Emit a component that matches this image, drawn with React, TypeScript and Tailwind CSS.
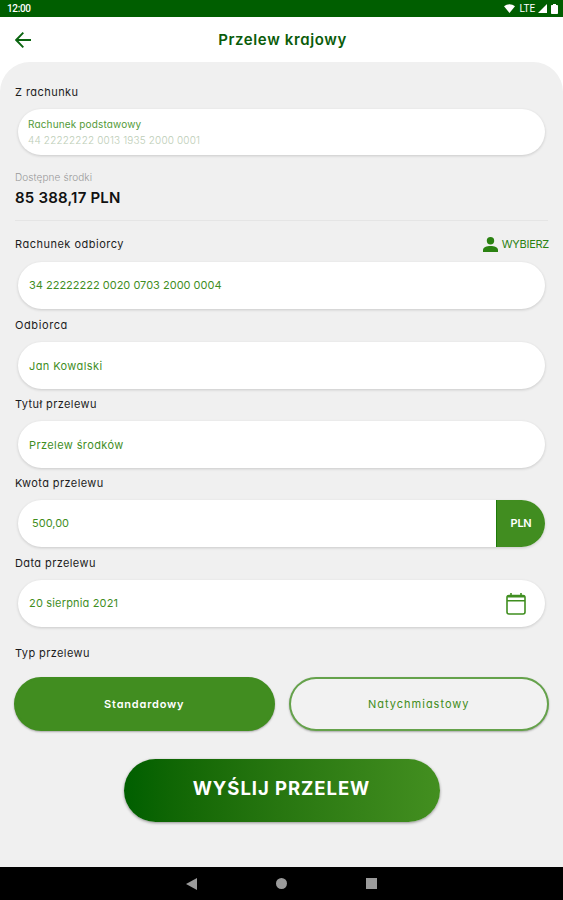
import React, { useState } from 'react';
import clsx from 'clsx';

type FieldProps = {
  label: string;
  labelClass?: string;
  className?: string;
  children: React.ReactNode;
};

const Field = ({ label, labelClass, className, children }: FieldProps) => (
  <div className={className}>
    <div className={clsx('h-4 pl-[15px] text-[11px] leading-4 text-[#1c1c1c]', labelClass)}>{label}</div>
    <div className="mt-[9px] mx-[18px] flex h-[47px] items-center overflow-hidden rounded-full bg-white text-[11px] text-[#3f8e1f] shadow-[0_1px_3px_rgba(0,0,0,0.16)]">
      {children}
    </div>
  </div>
);

const App = () => {
  const [transferType, setTransferType] = useState('standard');

  return (
    <div className="flex h-[900px] w-[563px] flex-col overflow-hidden bg-white font-['Inter','Open_Sans',sans-serif] [font-feature-settings:'cv11']">

      {/* --- STATUS BAR --- */}
      <div className="flex h-[17px] shrink-0 items-center justify-between bg-[#005e00] pl-[7px] pr-[5px] font-['Roboto',sans-serif] text-[10px] leading-[17px] text-white">
        <span className="font-medium tracking-[-0.35px]">12:00</span>
        <div className="flex items-center">
          <svg className="h-[9px] w-[11px]" viewBox="0 0 11 9" fill="currentColor">
            <path d="M0 2.3C3.2-.4 7.8-.4 11 2.3L5.5 9Z" />
          </svg>
          <span className="ml-[5px] mr-[3px] tracking-[-0.1px]">LTE</span>
          <svg className="h-[9px] w-[9px]" viewBox="0 0 9 9" fill="currentColor">
            <path d="M9 0V9H0Z" />
          </svg>
          <svg className="ml-[4px] h-[10px] w-[7px]" viewBox="0 0 7 10" fill="currentColor">
            <path d="M2 0H5V1H6.2Q7 1 7 1.8V9.2Q7 10 6.2 10H.8Q0 10 0 9.2V1.8Q0 1 .8 1H2Z" />
          </svg>
        </div>
      </div>

      {/* --- HEADER --- */}
      <header className="relative flex h-[45px] shrink-0 items-center justify-center">
        <button className="absolute left-[15px] top-[15px]" aria-label="Wstecz">
          <svg className="h-4 w-4" viewBox="0 0 16 16" fill="none" stroke="#0a6410" strokeWidth="1.9">
            <path d="M16 8H1.5M8.3 .7L1.2 8L8.3 15.3" />
          </svg>
        </button>
        <h1 className="pl-[2px] pt-[2px] text-[15px] font-semibold tracking-[0.62px] text-[#0a5c0a]">Przelew krajowy</h1>
      </header>

      {/* --- FORM --- */}
      <main className="flex flex-1 flex-col rounded-t-[30px] bg-[#f0f0f0] pt-[22px]">

        <div className="h-4 pl-[15px] text-[11px] leading-4 tracking-[0.45px] text-[#1c1c1c]">Z rachunku</div>
        <div className="mt-[9px] mx-[18px] h-[46px] shrink-0 rounded-full bg-white pl-[10px] pt-[7px] shadow-[0_1px_3px_rgba(0,0,0,0.16)]">
          <div className="text-[10px] leading-4 tracking-[0.15px] text-[#539a38]">Rachunek podstawowy</div>
          <div className="text-[10px] leading-4 font-light tracking-[0.16px] text-[#bccdb6]">44 22222222 0013 1935 2000 0001</div>
        </div>

        <div className="mt-[14px] pl-[15px] text-[10px] leading-4 font-light tracking-[0.1px] text-[#999]">Dostępne środki</div>
        <div className="mt-[3px] pl-[15px] text-[15px] leading-5 font-semibold tracking-[0.2px] text-[#111]">85 388,17 PLN</div>
        <hr className="mx-[15px] mt-[12px] border-[#e5e5e5]" />

        <div className="relative mt-[15px]">
          <Field label="Rachunek odbiorcy" labelClass="mb-[10px] tracking-[0.5px]">
            <span className="pb-[1px] pl-[11px]">34 22222222 0020 0703 2000 0004</span>
          </Field>
          <button className="absolute right-[14px] top-0 flex h-4 items-center text-[11px] tracking-[-0.25px] text-[#2b8212]">
            <svg className="mr-[4px] h-[15px] w-[15px]" viewBox="0 0 15 15" fill="#2b8212">
              <circle cx="7.5" cy="3.7" r="3.7" />
              <path d="M0 15V12.7C0 10.4 3.6 9 7.5 9S15 10.4 15 12.7V15Z" />
            </svg>
            WYBIERZ
          </button>
        </div>

        <Field className="mt-[8px]" label="Odbiorca" labelClass="tracking-[0.6px]">
          <span className="pl-[11px] pt-[2px] tracking-[0.4px]">Jan Kowalski</span>
        </Field>
        <Field className="mt-[7px]" label="Tytuł przelewu" labelClass="tracking-[0.4px]">
          <span className="pl-[11px] pt-[2px] tracking-[0.4px]">Przelew środków</span>
        </Field>
        <Field className="mt-[7px]" label="Kwota przelewu" labelClass="tracking-[0.4px]">
          <span className="flex-1 pl-[14px]">500,00</span>
          <span className="flex h-full w-[49px] items-center justify-center border-l border-[#1e7a08] bg-[#418d20] text-[11px] font-semibold tracking-[-0.3px] text-white">PLN</span>
        </Field>
        <Field className="mt-[8px]" label="Data przelewu" labelClass="tracking-[0.4px]">
          <span className="flex-1 pl-[11px] tracking-[0.17px]">20 sierpnia 2021</span>
          <svg className="mr-[19px] h-[22px] w-5" viewBox="0 0 20 22" fill="none" stroke="#3f8e1f" strokeWidth="1.6">
            <rect x="1" y="2.6" width="18" height="18.4" rx="2" />
            <path d="M1 7.8H19M5 0V3M15 0V3" />
            <path d="M1.6 3.2H18.4" strokeWidth="2.4" />
          </svg>
        </Field>

        <div className="mt-[18px] h-4 pl-[15px] text-[11px] leading-4 tracking-[0.4px] text-[#1c1c1c]">Typ przelewu</div>
        <div className="mx-[14px] mt-[16px] grid grid-cols-2 gap-[14px] text-[11px]">
          <button
            onClick={() => setTransferType('standard')}
            className={clsx(
              'h-[54px] rounded-full border-2 border-[#418d20]/80 shadow-[0_1px_2px_rgba(0,0,0,0.3)] tracking-[0.8px]',
              transferType === 'standard' ? 'bg-[#418d20] font-semibold text-white' : 'bg-[#f2f2f2] text-[#418d20]'
            )}
          >
            Standardowy
          </button>
          <button
            onClick={() => setTransferType('instant')}
            className={clsx(
              'h-[54px] rounded-full border-2 border-[#418d20]/80 shadow-[0_1px_2px_rgba(0,0,0,0.3)] tracking-[1px]',
              transferType === 'instant' ? 'bg-[#418d20] font-semibold text-white' : 'bg-[#f2f2f2] text-[#418d20]'
            )}
          >
            Natychmiastowy
          </button>
        </div>

        <button className="mx-auto mt-[28px] h-[63px] w-[316px] rounded-full bg-linear-to-r from-[#005f00] to-[#438f20] pb-[3px] text-[18.5px] font-bold tracking-[0.95px] text-white shadow-[0_1px_3px_rgba(0,0,0,0.4)]">
          WYŚLIJ PRZELEW
        </button>
      </main>

      {/* --- ANDROID NAV BAR --- */}
      <nav className="flex h-[33px] shrink-0 items-center justify-center gap-[79px] bg-black text-[#9b9b9b]">
        <svg className="h-[12px] w-[11px]" viewBox="0 0 11 12" fill="currentColor"><path d="M11 0V12L0 6Z" /></svg>
        <span className="h-[11px] w-[11px] rounded-full bg-current" />
        <span className="h-[11px] w-[11px] bg-current" />
      </nav>

    </div>
  );
};

export default App;
